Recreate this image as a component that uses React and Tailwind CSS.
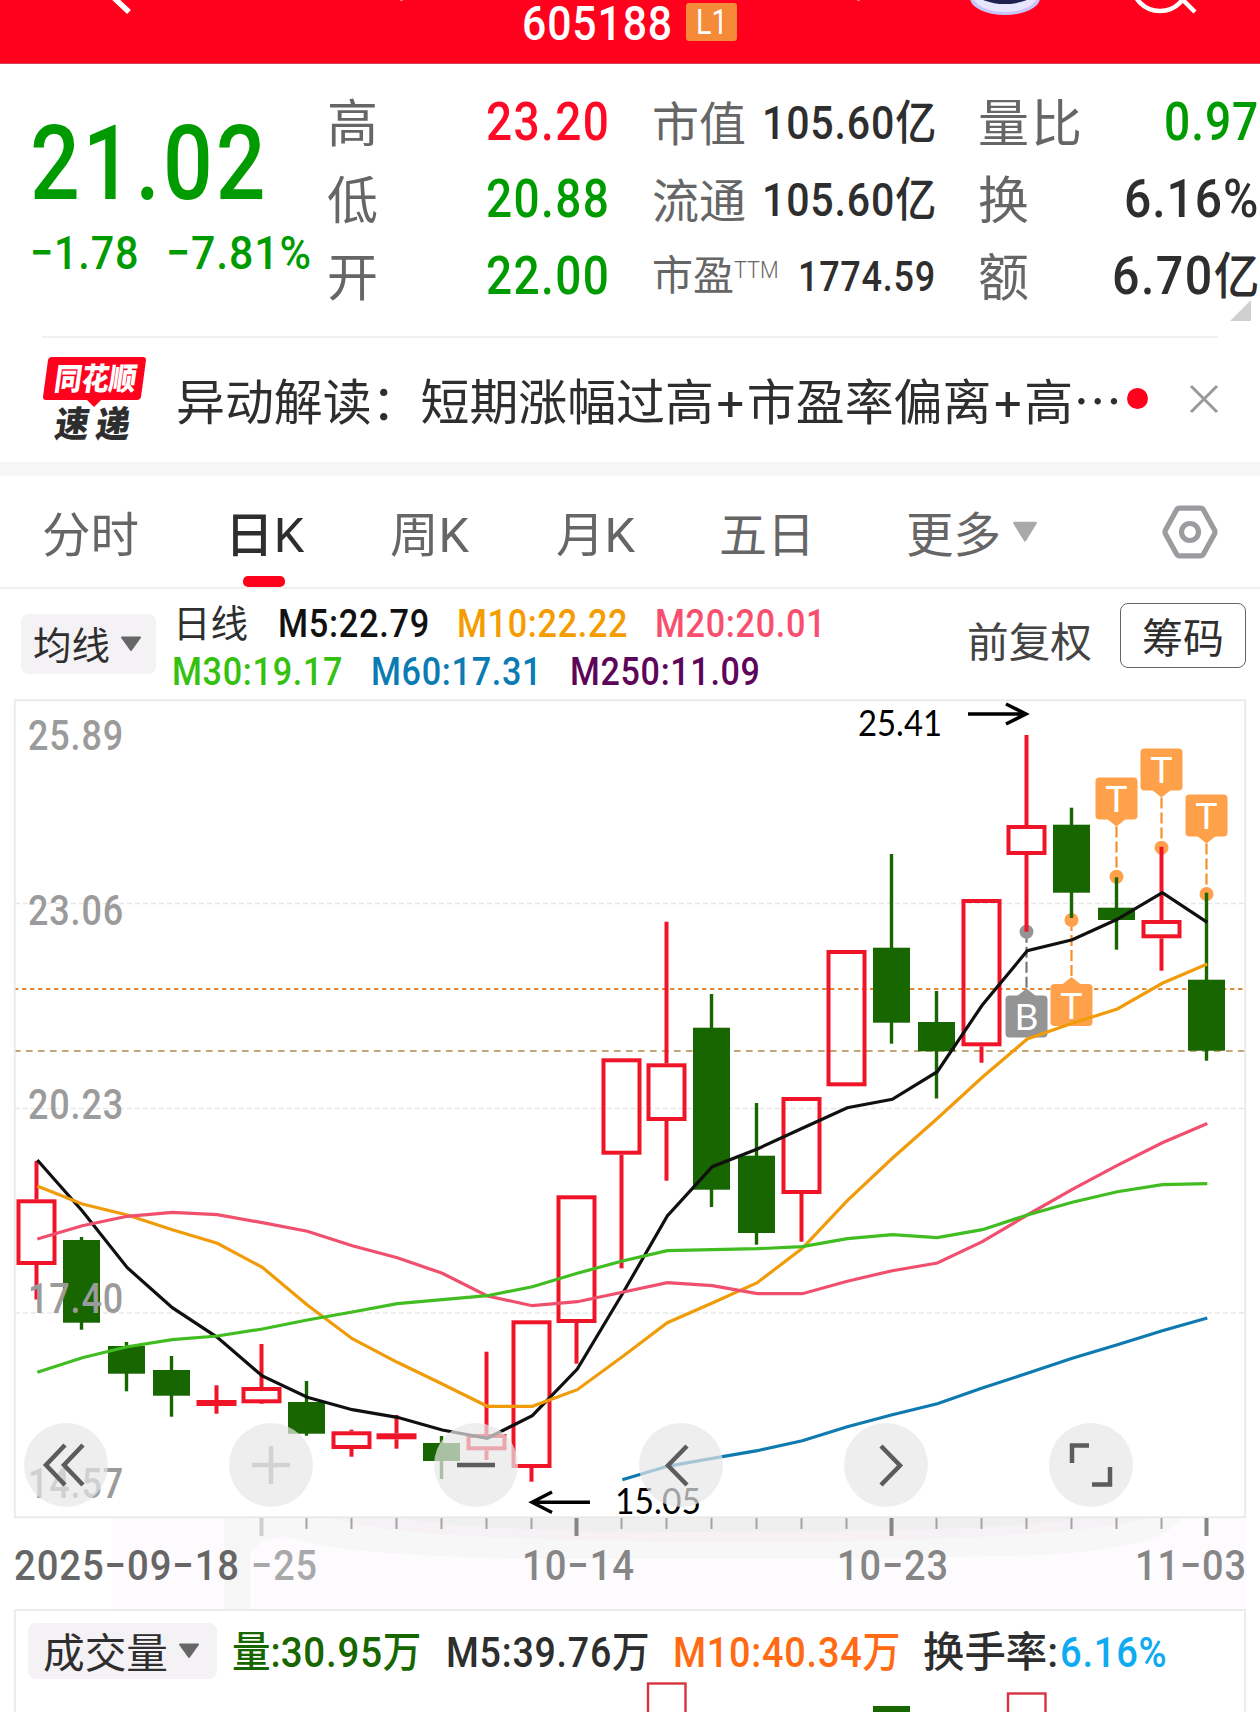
import { useLayoutEffect, useRef, useState } from 'react';

// Squeezes or stretches a line of text to the width of its box
function Fit({ className = '', children }) {
  const box = useRef(null);
  const inner = useRef(null);
  const [scale, setScale] = useState(1);

  useLayoutEffect(() => {
    const want = box.current.clientWidth;
    const have = inner.current.offsetWidth;
    if (have > 0) setScale(want / have);
  }, [children]);

  return (
    <span ref={box} className={`block shrink-0 leading-none whitespace-nowrap ${className}`}>
      <span ref={inner} className="inline-block origin-left" style={{ transform: `scaleX(${scale})` }}>
        {children}
      </span>
    </span>
  );
}

const RED = '#f01428';
const GREEN = '#186600';

// [up, high, top, bottom, low]
const candles = [
  [1, 1161, 1199.3, 1265, 1299.5],
  [0, 1237, 1240, 1322.7, 1329.7],
  [0, 1342, 1346, 1373.7, 1391.3],
  [0, 1356, 1370, 1395.7, 1416.7],
  [1, 1385.3, 1400, 1406, 1413.7],
  [1, 1344, 1387, 1403.3, 1404],
  [0, 1381, 1402, 1433.7, 1435.7],
  [1, 1429.7, 1431.3, 1449, 1456.7],
  [1, 1415, 1433.3, 1439.3, 1448.7],
  [0, 1436, 1443, 1461, 1479],
  [1, 1351.7, 1434, 1450.3, 1460],
  [1, 1320.3, 1320.3, 1468, 1481.7],
  [1, 1195.3, 1195.3, 1323, 1363.7],
  [1, 1058.3, 1058.3, 1154.7, 1268.3],
  [1, 921.7, 1063.3, 1121, 1180.7],
  [0, 994, 1027.7, 1189.7, 1207],
  [0, 1103, 1155.7, 1233, 1244.7],
  [1, 1097, 1097, 1194, 1241.7],
  [1, 950, 950, 1086.3, 1086.3],
  [0, 854, 947.7, 1022.7, 1043.7],
  [0, 991, 1022, 1051.3, 1098.5],
  [1, 899, 899, 1046.3, 1062.7],
  [1, 735, 825, 855, 931.7],
  [0, 807.7, 824.7, 892.7, 918],
  [0, 877.3, 907.7, 920, 949.7],
  [1, 846.7, 920, 938.3, 970.7],
  [0, 892.7, 979.7, 1050.7, 1060.7],
];

const averages = [
  {
    color: '#0f7ab0',
    start: 13,
    ys: [1479.7, 1466.3, 1458.3, 1450.7, 1440.7, 1426.7, 1414.7, 1403.7, 1388, 1373.3, 1358.3, 1344.7, 1330.7, 1318],
  },
  {
    color: '#101010',
    start: 0,
    ys: [1160, 1211, 1267.7, 1307.7, 1337.3, 1376, 1397.3, 1409.7, 1417.3, 1430, 1438.3, 1415.7, 1369, 1294, 1216, 1166.7, 1149, 1128.3, 1107.7, 1099.3, 1071.7, 1005, 950.7, 939.7, 919.3, 892.7, 922.3],
  },
  {
    color: '#f09c0a',
    start: 0,
    ys: [1186, 1204, 1215, 1229.7, 1243.3, 1267.3, 1305, 1338.7, 1362.3, 1384, 1406.3, 1406.3, 1389.7, 1356.7, 1322.7, 1303, 1282.7, 1248.3, 1200.7, 1158.3, 1118.5, 1077.3, 1039, 1023.3, 1009, 983.3, 964],
  },
  {
    color: '#f0506e',
    start: 0,
    ys: [1239, 1225.7, 1216.3, 1212.3, 1214.7, 1222.7, 1231.3, 1245.7, 1257.7, 1273.3, 1296, 1305.7, 1301.7, 1292.3, 1282.7, 1285.7, 1293.7, 1293.7, 1281.3, 1270.7, 1263, 1241.7, 1215, 1189.3, 1165.3, 1142.7, 1123.5],
  },
  {
    color: '#41bd22',
    start: 0,
    ys: [1372.3, 1357.7, 1346.7, 1339.7, 1336, 1329, 1320, 1312, 1303.7, 1299.7, 1295.7, 1286.7, 1273.3, 1261, 1250.7, 1249.7, 1248.7, 1246.7, 1238.7, 1234.7, 1237.7, 1229.7, 1215, 1202.3, 1191.7, 1184.7, 1183.7],
  },
];

// dot is the y of the marked price, box is the top of the label
const markers = [
  { i: 22, label: 'B', dot: 931.7, box: 995.5, below: true, fill: '#949494', line: '#777' },
  { i: 23, label: 'T', dot: 920, box: 984, below: true, fill: '#ffa14a', line: '#f58f2a' },
  { i: 24, label: 'T', dot: 876.7, box: 777.5, fill: '#ffa14a', line: '#f58f2a' },
  { i: 25, label: 'T', dot: 847.7, box: 748.5, fill: '#ffa14a', line: '#f58f2a' },
  { i: 26, label: 'T', dot: 894, box: 794.5, fill: '#ffa14a', line: '#f58f2a' },
];

const priceLabels = [
  ['25.89', 750],
  ['23.06', 925],
  ['20.23', 1119],
  ['17.40', 1313],
  ['14.57', 1498],
];

const cx = (i) => 36.5 + i * 45;

function Candle({ i, data }) {
  const [up, high, top, bottom, low] = data;
  const x = cx(i);
  if (!up) {
    return (
      <g fill={GREEN}>
        <rect x={x - 1.7} y={high} width="3.4" height={low - high} />
        <rect x={x - 18.5} y={top} width="37" height={bottom - top} />
      </g>
    );
  }
  return (
    <g fill={RED}>
      <rect x={x - 2} y={high} width="4" height={top - high} />
      <rect x={x - 2} y={bottom} width="4" height={low - bottom} />
      {bottom - top < 8 ? (
        <rect x={x - 20} y={top} width="40" height={bottom - top} />
      ) : (
        <rect x={x - 18} y={top + 2} width="36" height={bottom - top - 4} fill="none" stroke={RED} strokeWidth="4" />
      )}
    </g>
  );
}

function Marker({ m }) {
  const x = cx(m.i);
  const tip = m.below ? m.box - 7 : m.box + 49;
  const base = m.below ? m.box + 1 : m.box + 41;
  return (
    <g>
      <line x1={x} x2={x} y1={m.below ? m.dot : tip} y2={m.below ? tip : m.dot} stroke={m.line} strokeWidth="2.2" strokeDasharray="11 4" />
      <circle cx={x} cy={m.dot} r="7" fill={m.fill} />
      <path d={`M${x - 10} ${base}L${x} ${tip}L${x + 10} ${base}Z`} fill={m.fill} />
      <rect x={x - 21} y={m.box} width="42" height="42" rx="4" fill={m.fill} />
      <text x={x} y={m.box + 34.5} textAnchor="middle" className="font-['Lato'] text-[37px]" fill="#fff">
        {m.label}
      </text>
    </g>
  );
}

function KChart() {
  return (
    <svg className="block" width="1260" height="914" viewBox="0 695 1260 914">
      {/* date axis tint */}
      <rect x="112" y="1518" width="1134" height="91" fill="#fefbff" />
      <rect x="224" y="1518" width="26" height="91" fill="#f6f6f6" />
      <path d="M250 1518H1180C1172 1540 1110 1554 1010 1556L840 1559H530C400 1556 320 1550 285 1536L262 1542L250 1552Z" fill="#f7f7f7" />
      <path d="M330 1518H1150C1080 1536 900 1543 700 1542C520 1540 390 1536 330 1518Z" fill="#f5f1f5" />
      <path d="M400 1518H1090C1000 1530 860 1532 700 1532C560 1532 460 1528 400 1518Z" fill="#efefef" />

      <g stroke="#e8e8e8" strokeWidth="1.5" strokeDasharray="5 3">
        <line x1="15" x2="1245" y1="903.5" y2="903.5" />
        <line x1="15" x2="1245" y1="1108.5" y2="1108.5" />
        <line x1="15" x2="1245" y1="1313" y2="1313" />
      </g>
      <line x1="14" x2="1245" y1="989" y2="989" stroke="#e08a3c" strokeWidth="2" strokeDasharray="4.4 3.6" />
      <line x1="14" x2="1245" y1="1051" y2="1051" stroke="#c2a676" strokeWidth="2" strokeDasharray="6.6 5.4" />
      <rect x="14.75" y="700.25" width="1230.5" height="817" fill="none" stroke="#e9e9e9" strokeWidth="1.8" />

      {markers.map((m) => <Marker key={m.i} m={m} />)}
      {candles.map((c, i) => <Candle key={i} i={i} data={c} />)}
      {averages.map((a) => (
        <polyline
          key={a.color}
          points={a.ys.map((y, k) => `${cx(a.start + k) + 0.8},${y}`).join(' ')}
          fill="none"
          stroke={a.color}
          strokeWidth="3.2"
        />
      ))}

      <g className="font-['Roboto'] text-[42px] font-medium tracking-[1px]" fill="#9b9b9b">
        {priceLabels.map(([t, y]) => (
          <text key={t} x="28" y={y} textLength="96" lengthAdjust="spacingAndGlyphs">{t}</text>
        ))}
      </g>

      {/* high and low callouts */}
      <g className="font-['Lato'] text-[37px]" fill="#000">
        <text x="858" y="736" textLength="84" lengthAdjust="spacingAndGlyphs">25.41</text>
        <text x="615" y="1514" textLength="86" lengthAdjust="spacingAndGlyphs">15.05</text>
      </g>
      <g fill="none" stroke="#000" strokeWidth="3.4">
        <path d="M968 714H1025M1006 704L1026 714L1006 724" />
        <path d="M590 1502.3H533M552 1492L532 1502.3L552 1512.5" />
      </g>

      {candles.map((c, i) => {
        if (i < 5) return null;
        const major = i % 7 === 5;
        return (
          <rect
            key={i}
            x={cx(i) - (major ? 2 : 1)}
            y="1518"
            width={major ? 4 : 2}
            height={major ? 18 : 11}
            fill={i === 5 ? '#cfcdd0' : major ? '#858585' : '#a3a3a3'}
          />
        );
      })}
      <g className="font-['Roboto'] text-[42px] font-medium tracking-[1px]" fill="#868686">
        <text x="14" y="1580" textLength="226" lengthAdjust="spacingAndGlyphs" fill="#666">2025−09−18</text>
        <text x="251" y="1580" textLength="67" lengthAdjust="spacingAndGlyphs" fill="#a9a9a9">−25</text>
        <text x="522" y="1580" textLength="113" lengthAdjust="spacingAndGlyphs">10−14</text>
        <text x="837" y="1580" textLength="112" lengthAdjust="spacingAndGlyphs">10−23</text>
        <text x="1135" y="1580" textLength="112" lengthAdjust="spacingAndGlyphs">11−03</text>
      </g>
    </svg>
  );
}

function RoundButton({ label, children }) {
  return (
    <button aria-label={label} className="flex size-[84px] items-center justify-center rounded-full bg-[#e7e7e7]/70">
      <svg width="84" height="84" viewBox="0 0 84 84" fill="none" stroke="#5c5c5c" strokeWidth="4.5">
        {children}
      </svg>
    </button>
  );
}

function Caret({ className }) {
  return (
    <svg className={`shrink-0 ${className}`} viewBox="0 0 22 16" preserveAspectRatio="none" fill="currentColor" stroke="currentColor" strokeWidth="2" strokeLinejoin="round">
      <path d="M2 1.5H20L11 14Z" />
    </svg>
  );
}

function StatusHeader() {
  return (
    <header className="relative flex h-16 justify-center border-b border-[#d9405a] bg-[#ff001d]">
      <svg className="absolute inset-0" width="1260" height="63" viewBox="0 0 1260 63" fill="none">
        <path d="M113 -3L129 12" stroke="#fff" strokeWidth="5.5" />
        <ellipse cx="1005" cy="-2" rx="35" ry="17" fill="#c9c4fb" />
        <ellipse cx="1005" cy="-4" rx="32" ry="16" fill="#e8e6ff" />
        <ellipse cx="1005" cy="-7" rx="28" ry="11" fill="#1d2150" />
        <circle cx="1160" cy="-17" r="28" stroke="#fff" strokeWidth="4.5" />
        <path d="M1181 -2L1195 12" stroke="#fff" strokeWidth="4.5" />
        <path d="M400 0H403M857 0H860" stroke="#fff" strokeOpacity=".6" strokeWidth="1.5" />
      </svg>
      <div className="flex w-[216px] items-start justify-between">
        <Fit className="-mt-px w-[151px] text-[49px] font-medium tracking-[.02em] text-white">605188</Fit>
        <div className="mt-[3px] mr-px flex h-[38px] w-[51px] items-center justify-center rounded-[3px] bg-[#f58a38]">
          <Fit className="w-[32px] text-[35px] text-white">L1</Fit>
        </div>
      </div>
    </header>
  );
}

function Stats() {
  return (
    <section className="relative flex h-[272px] bg-white">
      <div className="w-[329px] shrink-0 pt-[48px] text-[#009b00]">
        <Fit className="ml-[30px] w-[239px] text-[104px] font-medium tracking-[.035em]">21.02</Fit>
        <div className="mt-[13px] flex pl-[30px]">
          <Fit className="w-[109px] text-[47px] font-medium tracking-[.02em]">−1.78</Fit>
          <Fit className="ml-[27px] w-[146px] text-[47px] font-medium tracking-[.02em]">−7.81%</Fit>
        </div>
      </div>

      <div className="-ml-[2px] grid w-[283px] shrink-0 grid-rows-[77px_77px_77px] pt-5 text-[51px] font-medium">
        <Row label="高"><Fit className="w-[124px] text-[53px] tracking-[.03em] text-[#ff0a26]">23.20</Fit></Row>
        <Row label="低"><Fit className="w-[124px] text-[53px] tracking-[.03em] text-[#009b00]">20.88</Fit></Row>
        <Row label="开"><Fit className="w-[124px] text-[53px] tracking-[.03em] text-[#009b00]">22.00</Fit></Row>
      </div>

      <div className="ml-[42px] grid w-[284px] shrink-0 grid-rows-[77px_77px_77px] pt-5 text-[47px] font-medium text-[#2e2e2e]">
        <Row label="市值"><Fit className="w-[174px] text-[47px]"><span className="tracking-[.02em]">105.60</span>亿</Fit></Row>
        <Row label="流通"><Fit className="w-[174px] text-[47px]"><span className="tracking-[.02em]">105.60</span>亿</Fit></Row>
        <div className="flex items-center justify-between">
          <span className="flex text-[41px] leading-none font-normal text-[#666]">
            <Fit className="w-[82px]">市盈</Fit>
            <span className="mt-[3px] block">
              <Fit className="w-[45px] text-[23px] font-light">TTM</Fit>
            </span>
          </span>
          <Fit className="w-[138px] text-[42px] tracking-[.02em]">1774.59</Fit>
        </div>
      </div>

      <div className="ml-[42px] grid w-[281px] shrink-0 grid-rows-[77px_77px_77px] pt-5 text-[51px] font-medium text-[#2e2e2e]">
        <Row label="量比" wide><Fit className="w-[95px] text-[53px] tracking-[.02em] text-[#009b00]">0.97</Fit></Row>
        <Row label="换"><Fit className="w-[135px] text-[53px] tracking-[.02em]">6.16%</Fit></Row>
        <Row label="额"><Fit className="w-[147px] text-[53px]"><span className="tracking-[.03em]">6.70</span><span className="text-[50px]">亿</span></Fit></Row>
      </div>
      <svg className="absolute right-[9px] bottom-[15px]" width="21" height="21" viewBox="0 0 21 21">
        <path d="M21 0V21H0Z" fill="#d0d0d0" />
      </svg>
    </section>
  );
}

function Row({ label, wide, children }) {
  return (
    <div className="flex items-center justify-between">
      <span className={`pt-[3px] leading-none font-normal text-[#666] ${wide ? 'tracking-[2px]' : ''}`}>{label}</span>
      {children}
    </div>
  );
}

function News() {
  return (
    <section className="flex h-[126px] px-[42px]">
      <div className="flex w-full items-start border-t-2 border-[#f0f0f0]">
        <svg className="mt-[17px] shrink-0 overflow-visible" width="106" height="92" viewBox="42 355 106 92">
          <path d="M52 357H143Q146 357 146 360L141 397Q140 400 137 400H101L94 407L87 400H46Q43 400 43 397L48 360Q49 357 52 357Z" fill="#ff001d" />
          <g className="font-['Noto_Sans_CJK_SC'] font-black" transform="skewX(-8)">
            <text x="108" y="390" fontSize="31" textLength="82" lengthAdjust="spacingAndGlyphs" fill="#fff">同花顺</text>
            <text x="115" y="437" fontSize="36" textLength="34" lengthAdjust="spacingAndGlyphs" fill="#2e2e2e">速</text>
            <text x="156" y="437" fontSize="36" textLength="34" lengthAdjust="spacingAndGlyphs" fill="#2e2e2e">递</text>
          </g>
        </svg>
        <div className="ml-7 flex h-[126px] items-center pt-[6px] text-[#2e2e2e]">
          <Fit className="w-[946px] text-[48.8px]">
            异动解读：短期涨幅过高<span className="px-[2.6px]">+</span>市盈率偏离<span className="px-[2.6px]">+</span>高⋯
          </Fit>
        </div>
        <span className="mt-[50px] ml-[5px] size-[21px] shrink-0 rounded-full bg-[#ff001d]" />
        <svg className="mt-[46px] ml-[41px] shrink-0" width="30" height="30" viewBox="0 0 30 30" stroke="#999" strokeWidth="3">
          <path d="M2 2L28 28M28 2L2 28" />
        </svg>
      </div>
    </section>
  );
}

function Tabs() {
  return (
    <nav className="flex h-[113px] items-center border-b-2 border-[#efefef] text-[48px] text-[#666]">
      <Fit className="ml-[42px] w-[97px] pt-[8px]">分时</Fit>
      <div className="relative ml-[86px] w-[79px] pt-[8px] text-[#2e2e2e]">
        <Fit className="w-[79px]"><span className="font-medium">日</span>K</Fit>
        <span className="absolute top-[72px] left-[18px] h-[11px] w-[42px] rounded-[5px] bg-[#ff001d]" />
      </div>
      <Fit className="ml-[86px] w-[79px] pt-[8px]">周K</Fit>
      <Fit className="ml-[87px] w-[79px] pt-[8px]">月K</Fit>
      <Fit className="ml-[84px] w-[96px] pt-[8px]">五日</Fit>
      <Fit className="ml-[91px] w-[95px] pt-[8px]">更多</Fit>
      <Caret className="ml-[11px] h-[22px] w-[26px] text-[#aaa8ab]" />
      <svg className="ml-[123px] shrink-0" width="58" height="56" viewBox="0 0 58 56" fill="none" stroke="#9d9ba0" strokeWidth="5.2" strokeLinejoin="round">
        <path d="M18.5 4.2H39.5Q41.5 4.2 42.5 6L53.5 26Q54.5 28 53.5 30L42.5 50Q41.5 51.8 39.5 51.8H18.5Q16.5 51.8 15.5 50L4.5 30Q3.5 28 4.5 26L15.5 6Q16.5 4.2 18.5 4.2Z" />
        <circle cx="29" cy="28" r="8.5" />
      </svg>
    </nav>
  );
}

function AverageBar() {
  return (
    <section className="flex h-[106px] items-start pl-[21px]">
      <button className="mt-[25px] flex h-[60px] w-[135px] shrink-0 items-center rounded-lg bg-[#f5f2f6] pl-[12px] text-[#2e2e2e]">
        <Fit className="w-[77px] pt-[4px] text-[38px]">均线</Fit>
        <Caret className="ml-[10px] h-[16px] w-[22px] text-[#666]" />
      </button>
      <div className="ml-[17px] w-[670px] shrink-0 pt-[10px] text-[38px] font-medium tracking-[.02em]">
        <div className="flex h-[49px] items-center">
          <Fit className="w-[75px] font-normal tracking-normal text-[#2e2e2e]">日线</Fit>
          <Fit className="ml-[30px] w-[152px] text-[#111]">M5:22.79</Fit>
          <Fit className="ml-[27px] w-[171px] text-[#f59c00]">M10:22.22</Fit>
          <Fit className="ml-[27px] w-[171px] text-[#f94f6e]">M20:20.01</Fit>
        </div>
        <div className="flex h-[48px] items-center">
          <Fit className="-ml-px w-[171px] text-[#36c00f]">M30:19.17</Fit>
          <Fit className="ml-[28px] w-[171px] text-[#0b7bb3]">M60:17.31</Fit>
          <Fit className="ml-[28px] w-[191px] text-[#5d0659]">M250:11.09</Fit>
        </div>
      </div>
      <Fit className="mt-[34px] ml-[124px] w-[125px] text-[41px] text-[#444]">前复权</Fit>
      <button className="mt-[14px] ml-[28px] flex h-[65px] w-[126px] shrink-0 items-center justify-center rounded-lg border border-[#666] text-[#2e2e2e]">
        <Fit className="w-[82px] pt-[7px] text-[41px]">筹码</Fit>
      </button>
    </section>
  );
}

function VolumePanel() {
  return (
    <section className="mx-[14px] h-[103px] border-x-2 border-t-2 border-[#ececec]">
      <div className="mt-[12px] flex h-[56px] items-center pl-[12px] text-[42px] font-medium">
        <button className="flex h-[56px] w-[189px] shrink-0 items-center rounded-lg bg-[#f5f2f6] pl-[14px] font-normal text-[#2e2e2e]">
          <Fit className="w-[125px] pt-[7px] text-[41px]">成交量</Fit>
          <Caret className="ml-[11px] h-[16px] w-[22px] text-[#666]" />
        </button>
        <Fit className="ml-[15px] w-[189px] pt-[4px] text-[#186600]">量:<span className="tracking-[.02em]">30.95</span>万</Fit>
        <Fit className="ml-[25px] w-[204px] pt-[4px] text-[#2e2e2e]"><span className="tracking-[.02em]">M5:39.76</span>万</Fit>
        <Fit className="ml-[23px] w-[227px] pt-[4px] text-[#ff6a13]"><span className="tracking-[.02em]">M10:40.34</span>万</Fit>
        <Fit className="ml-[23px] w-[135px] pt-[4px] text-[#2e2e2e]">换手率:</Fit>
        <Fit className="ml-[2px] w-[107px] pt-[4px] tracking-[.02em] text-[#0fabf2]">6.16%</Fit>
      </div>
      <svg className="block" width="1228" height="33" viewBox="16 1679 1228 33">
        <rect x="648" y="1683.5" width="37.5" height="40" fill="none" stroke="#d9333f" strokeWidth="2.4" />
        <rect x="873" y="1706" width="37" height="20" fill={GREEN} />
        <rect x="1008" y="1693.5" width="37.5" height="40" fill="none" stroke="#d9333f" strokeWidth="2.4" />
      </svg>
    </section>
  );
}

export default function App() {
  return (
    <div className="h-[1712px] w-[1260px] overflow-hidden bg-white font-['Roboto','Noto_Sans_CJK_SC',sans-serif]">
      <StatusHeader />
      <Stats />
      <News />
      <div className="h-[14px] bg-[#f6f6f6]" />
      <Tabs />
      <AverageBar />
      <div className="relative">
        <KChart />
        {/* chart controls */}
        <div className="absolute top-[728px] left-[24px] flex gap-[121px]">
          <RoundButton label="最早"><path d="M41 22L22 42L41 62M59 22L40 42L59 62" /></RoundButton>
          <RoundButton label="放大"><path d="M42 23V61M23 42H61" stroke="#d2d2d2" /></RoundButton>
          <RoundButton label="缩小"><path d="M23 42H61" /></RoundButton>
          <RoundButton label="上一个"><path d="M48 23L29 42.5L48 62" /></RoundButton>
          <RoundButton label="下一个"><path d="M37 23L56 42.5L37 62" /></RoundButton>
          <RoundButton label="全屏"><path d="M23 40V22.5H40M43 61.5H61V44" /></RoundButton>
        </div>
      </div>
      <VolumePanel />
    </div>
  );
}
